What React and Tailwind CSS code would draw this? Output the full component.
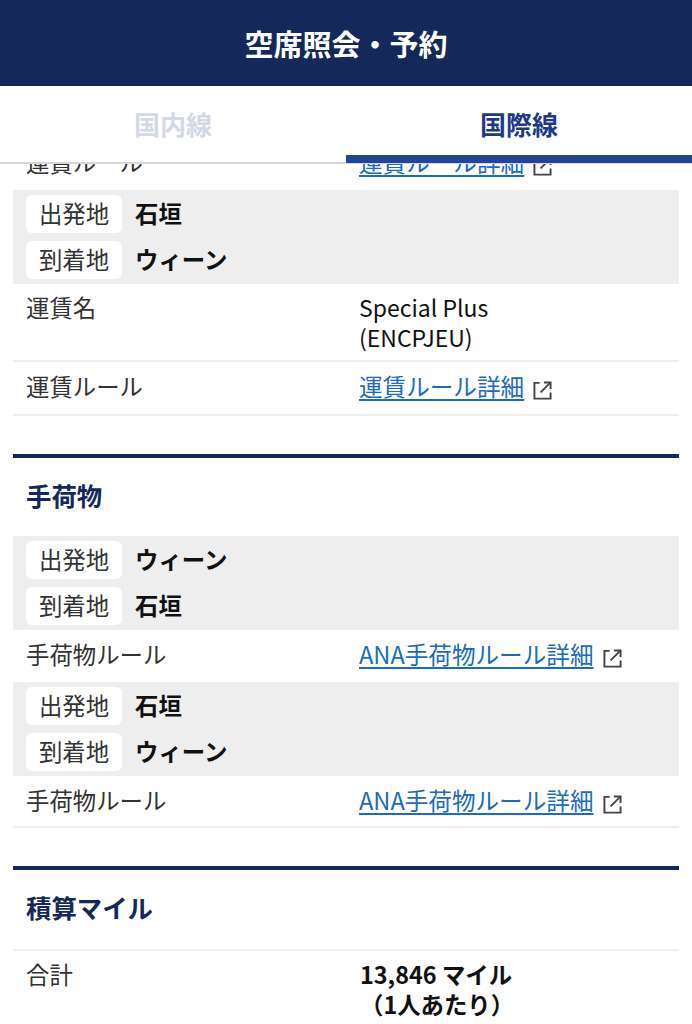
import React from "react";

const jp = "font-['Noto_Sans_CJK_JP','Noto_Sans',sans-serif]";

function ExternalIcon() {
  return (
    <svg width="19" height="19" viewBox="0 0 20 20" fill="none" stroke="#444" strokeWidth="2" className="ml-[9px] mt-[10px] shrink-0">
      <path d="M7 2H1.5V18.5H18.5V12" />
      <path d="M8 12L18 2" />
      <path d="M11.5 1.5H18.5V8.5" />
    </svg>
  );
}

function RuleLink({ children }) {
  return (
    <div className="flex items-start pl-[1px] text-[23.6px]">
      <a className="text-[#1a6cc0] underline underline-offset-[3px] decoration-[1.5px]">{children}</a>
      <ExternalIcon />
    </div>
  );
}

function Route({ from, to }) {
  return (
    <div className="mx-[13px] bg-[#eeeeee] px-[13px] py-[5px] flex flex-col gap-2">
      <div className="flex items-center gap-[13px]">
        <span className="w-[96px] h-[38px] pb-[2px] bg-white rounded-md flex items-center justify-center text-[#333]">出発地</span>
        <span className="pb-[2px] font-bold text-[#111]">{from}</span>
      </div>
      <div className="flex items-center gap-[13px]">
        <span className="w-[96px] h-[38px] pb-[2px] bg-white rounded-md flex items-center justify-center text-[#333]">到着地</span>
        <span className="pb-[2px] font-bold text-[#111]">{to}</span>
      </div>
    </div>
  );
}

function Row({ label, children, border, className = "" }) {
  return (
    <div className={`mx-[13px] px-[13px] flex ${border ? "border-b-2 border-[#eeeeee]" : ""} ${className}`}>
      <div className="w-[332px] shrink-0 text-[#333]">{label}</div>
      <div className="text-[#111]">{children}</div>
    </div>
  );
}

function SectionTitle({ children }) {
  return (
    <div className="mx-[13px] border-t-4 border-[#15285a] px-[13px] pt-[17px] pb-[4px] text-[25.4px] leading-[40px] font-bold text-[#15285a]">
      {children}
    </div>
  );
}

export default function App() {
  return (
    <div className={`w-[692px] h-[1024px] overflow-hidden bg-white text-[23.4px] leading-[30px] ${jp}`}>
      <div className="h-[86px] bg-[#15285a] flex items-center justify-center text-white text-[29px] font-bold">
        空席照会・予約
      </div>
      <div className="relative z-10 h-[78px] bg-white border-b-2 border-[#d8d8d8] grid grid-cols-2 text-[26px] font-bold">
        <div className="flex items-center justify-center text-[#d3d8e6]">国内線</div>
        <div className="relative flex items-center justify-center text-[#1d3a8a]">
          国際線
          <div className="absolute left-0 right-0 bottom-[-1px] h-[8px] bg-[#24439a]"></div>
        </div>
      </div>

      <div className="-mt-[17px]">
        <Row label="運賃ルール" className="h-[43px]">
          <RuleLink>運賃ルール詳細</RuleLink>
        </Row>
        <Route from="石垣" to="ウィーン" />
        <Row label="運賃名" border className="h-[78px] pt-[8px]">
          <div className="pl-[1px] text-[23px]">Special Plus<br />(ENCPJEU)</div>
        </Row>
        <Row label="運賃ルール" border className="h-[54px] pt-[9px]">
          <RuleLink>運賃ルール詳細</RuleLink>
        </Row>

        <div className="mt-[38px]"><SectionTitle>手荷物</SectionTitle></div>
        <div className="mt-[17px]"><Route from="ウィーン" to="石垣" /></div>
        <Row label="手荷物ルール" className="h-[52px] pt-[9px]">
          <RuleLink>ANA手荷物ルール詳細</RuleLink>
        </Row>
        <Route from="石垣" to="ウィーン" />
        <Row label="手荷物ルール" border className="h-[52px] pt-[9px]">
          <RuleLink>ANA手荷物ルール詳細</RuleLink>
        </Row>

        <div className="mt-[38px]"><SectionTitle>積算マイル</SectionTitle></div>
        <div className="mx-[13px] mt-[18px] border-t-2 border-[#eeeeee]"></div>
        <Row label="合計" className="pt-[8px]">
          <div className="pl-[2px] font-bold">
            13,846 マイル
            <br />
            （1人あたり）
          </div>
        </Row>
      </div>
    </div>
  );
}
